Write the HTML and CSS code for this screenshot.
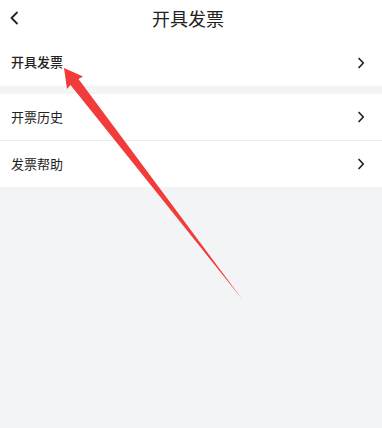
FILE: index.html
```html
<!DOCTYPE html>
<html lang="zh">
<head>
<meta charset="utf-8">
<link rel="stylesheet" href="styles.css">
</head>
<body>
<div class="page">
  <header class="nav">
    <span class="back">
      <svg width="10" height="14" viewBox="0 0 10 14"><path d="M8 1.5 L2.5 7 L8 12.5" fill="none" stroke="#222" stroke-width="1.8" stroke-linecap="round" stroke-linejoin="round"/></svg>
    </span>
    <h1 class="title">开具发票</h1>
  </header>
  <section class="group">
    <div class="row"><span class="label strong">开具发票</span><svg class="chev" width="8" height="12" viewBox="0 0 8 12"><path d="M2 1.5 L6.3 6 L2 10.5" fill="none" stroke="#222" stroke-width="1.7" stroke-linecap="round" stroke-linejoin="round"/></svg></div>
  </section>
  <section class="group">
    <div class="row"><span class="label">开票历史</span><svg class="chev" width="8" height="12" viewBox="0 0 8 12"><path d="M2 1.5 L6.3 6 L2 10.5" fill="none" stroke="#222" stroke-width="1.7" stroke-linecap="round" stroke-linejoin="round"/></svg></div>
    <div class="row sep"><span class="label">发票帮助</span><svg class="chev" width="8" height="12" viewBox="0 0 8 12"><path d="M2 1.5 L6.3 6 L2 10.5" fill="none" stroke="#222" stroke-width="1.7" stroke-linecap="round" stroke-linejoin="round"/></svg></div>
  </section>
  <svg class="arrow" width="382" height="428" viewBox="0 0 382 428">
    <path d="M64 68 L83 76.5 L78.5 79 L242 299 L70.5 85 L67 89 Z" fill="#f23b3b"/>
  </svg>
</div>
</body>
</html>
```
FILE: styles.css
```css
html, body {
  margin: 0;
  padding: 0;
}
body {
  background: #f3f4f6;
  font-family: "Noto Sans CJK SC", "Noto Sans", sans-serif;
  color: #222;
}
.page {
  position: relative;
  width: 382px;
  height: 428px;
  overflow: hidden;
}
.nav {
  height: 40px;
  background: #fff;
  display: flex;
  align-items: center;
  justify-content: center;
  position: relative;
}
.back {
  position: absolute;
  left: 9px;
  top: 11px;
  display: flex;
}
.title {
  margin: 0 6px 4px 0;
  font-size: 18px;
  font-weight: 400;
  line-height: 1;
  color: #222;
}
.group {
  background: #fff;
  margin-bottom: 8px;
}
.row {
  height: 46px;
  display: flex;
  align-items: center;
  justify-content: space-between;
  padding: 0 17px 0 11px;
  box-sizing: border-box;
}
.row.sep {
  border-top: 1px solid #ececec;
  height: 47px;
}
.label {
  font-size: 13px;
  line-height: 1;
  margin-top: -1px;
}
.label.strong {
  font-weight: 500;
  margin-top: -3px;
}
.chev {
  display: block;
}
.arrow {
  position: absolute;
  left: 0;
  top: 0;
  pointer-events: none;
}
```
